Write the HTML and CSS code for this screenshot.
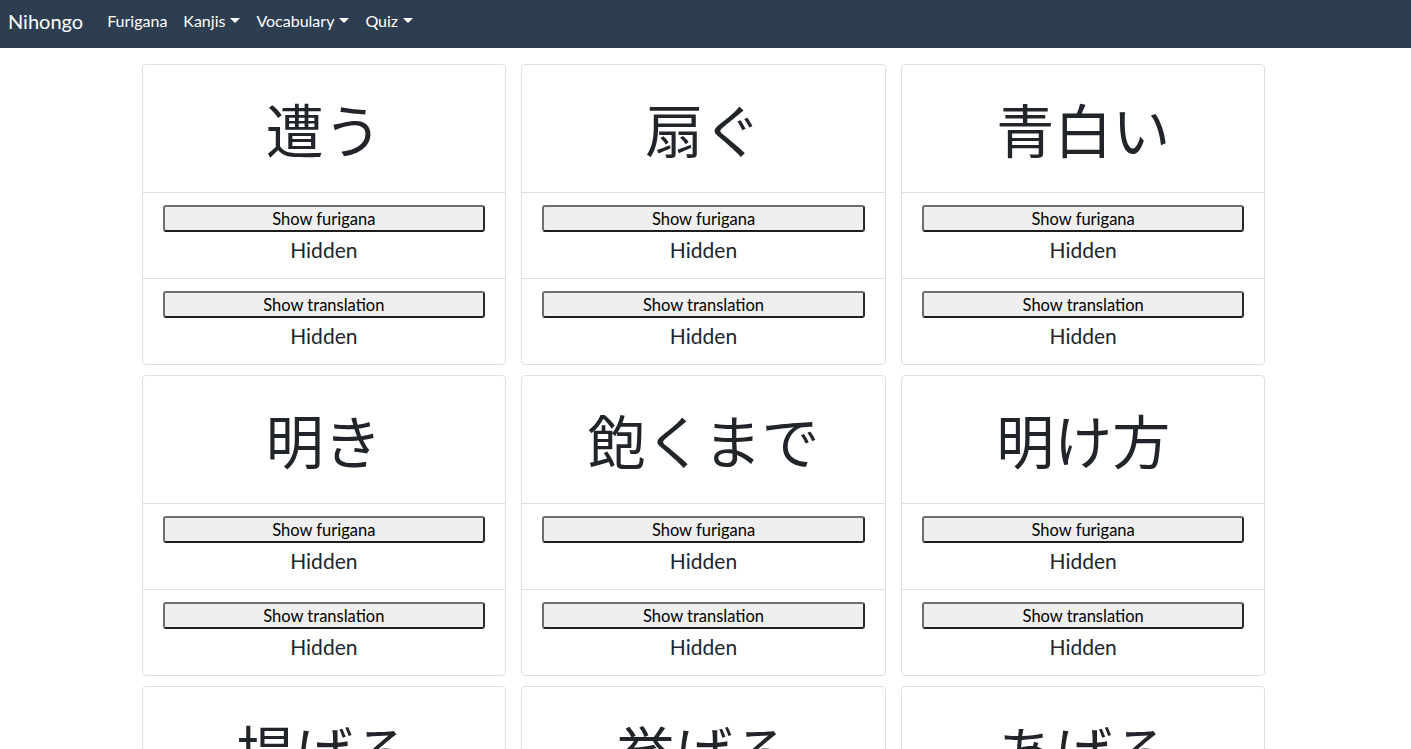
FILE: index.html
```html
<!DOCTYPE html>
<html lang="ja">
<head>
<meta charset="utf-8">
<title>Nihongo</title>
<link rel="stylesheet" href="styles.css">
</head>
<body>
<nav class="navbar">
  <a class="brand" href="#">Nihongo</a>
  <ul class="nav">
    <li><a class="nav-link" href="#">Furigana</a></li>
    <li><a class="nav-link toggle" href="#">Kanjis</a></li>
    <li><a class="nav-link toggle" href="#">Vocabulary</a></li>
    <li><a class="nav-link toggle" href="#">Quiz</a></li>
  </ul>
</nav>
<main class="container">
  <div class="card">
    <div class="word">遭う</div>
    <div class="item"><button class="btn">Show furigana</button><div class="hidden-text">Hidden</div></div>
    <div class="item"><button class="btn">Show translation</button><div class="hidden-text">Hidden</div></div>
  </div>
  <div class="card">
    <div class="word">扇ぐ</div>
    <div class="item"><button class="btn">Show furigana</button><div class="hidden-text">Hidden</div></div>
    <div class="item"><button class="btn">Show translation</button><div class="hidden-text">Hidden</div></div>
  </div>
  <div class="card">
    <div class="word">青白い</div>
    <div class="item"><button class="btn">Show furigana</button><div class="hidden-text">Hidden</div></div>
    <div class="item"><button class="btn">Show translation</button><div class="hidden-text">Hidden</div></div>
  </div>
  <div class="card">
    <div class="word">明き</div>
    <div class="item"><button class="btn">Show furigana</button><div class="hidden-text">Hidden</div></div>
    <div class="item"><button class="btn">Show translation</button><div class="hidden-text">Hidden</div></div>
  </div>
  <div class="card">
    <div class="word">飽くまで</div>
    <div class="item"><button class="btn">Show furigana</button><div class="hidden-text">Hidden</div></div>
    <div class="item"><button class="btn">Show translation</button><div class="hidden-text">Hidden</div></div>
  </div>
  <div class="card">
    <div class="word">明け方</div>
    <div class="item"><button class="btn">Show furigana</button><div class="hidden-text">Hidden</div></div>
    <div class="item"><button class="btn">Show translation</button><div class="hidden-text">Hidden</div></div>
  </div>
  <div class="card">
    <div class="word">提げる</div>
    <div class="item"><button class="btn">Show furigana</button><div class="hidden-text">Hidden</div></div>
    <div class="item"><button class="btn">Show translation</button><div class="hidden-text">Hidden</div></div>
  </div>
  <div class="card">
    <div class="word">挙げる</div>
    <div class="item"><button class="btn">Show furigana</button><div class="hidden-text">Hidden</div></div>
    <div class="item"><button class="btn">Show translation</button><div class="hidden-text">Hidden</div></div>
  </div>
  <div class="card">
    <div class="word">あげる</div>
    <div class="item"><button class="btn">Show furigana</button><div class="hidden-text">Hidden</div></div>
    <div class="item"><button class="btn">Show translation</button><div class="hidden-text">Hidden</div></div>
  </div>
</main>
</body>
</html>
```
FILE: styles.css
```css
* { box-sizing: border-box; }
html, body { margin: 0; padding: 0; }
body {
  font-family: Lato, "Noto Sans CJK JP", sans-serif;
  font-size: 15px;
  line-height: 1.5;
  color: #212529;
  background: #fff;
  padding-right: 4px;
}
.navbar {
  height: 48px;
  margin-right: -4px;
  background: #2c3e50;
  display: flex;
  align-items: center;
  padding: 0 8px 6px 8px;
}
.brand {
  color: #fff;
  text-decoration: none;
  font-size: 20px;
  line-height: 30px;
  margin-right: 16px;
}
.nav {
  list-style: none;
  margin: 0;
  padding: 0;
  display: flex;
}
.nav-link {
  display: block;
  color: #fff;
  text-decoration: none;
  padding: 0 8px;
  font-size: 16px;
  line-height: 22px;
}
.toggle::after {
  content: "";
  display: inline-block;
  margin-left: 5px;
  vertical-align: 4px;
  border-top: 5px solid #fff;
  border-left: 5.5px solid transparent;
  border-right: 5.5px solid transparent;
}
.container {
  width: 1124px;
  margin: 16px auto 0;
  display: grid;
  grid-template-columns: repeat(3, 1fr);
  column-gap: 15px;
  row-gap: 10px;
}
.card {
  border: 1px solid #dfdfdf;
  border-radius: 4px;
  background: #fff;
  text-align: center;
}
.word {
  height: 127px;
  display: flex;
  align-items: center;
  justify-content: center;
  font-family: "Noto Sans CJK JP", sans-serif;
  font-size: 58px;
  line-height: 1;
  color: #212529;
  padding-bottom: 2px;
}
.item {
  border-top: 1px solid #dfdfdf;
  padding: 12px 20px;
  height: 86px;
}
.btn {
  display: block;
  width: 100%;
  height: 27px;
  margin: 0;
  padding: 0;
  background: #efefef;
  border: 2px solid;
  border-color: #6e6e6e #2a2a2a #1e1e1e #6e6e6e;
  border-radius: 3px;
  font-family: Lato, sans-serif;
  font-size: 16.5px;
  color: #000;
  line-height: 22px;
}
.hidden-text {
  margin-top: 6px;
  font-size: 21px;
  line-height: 24px;
  color: #212529;
}
```
